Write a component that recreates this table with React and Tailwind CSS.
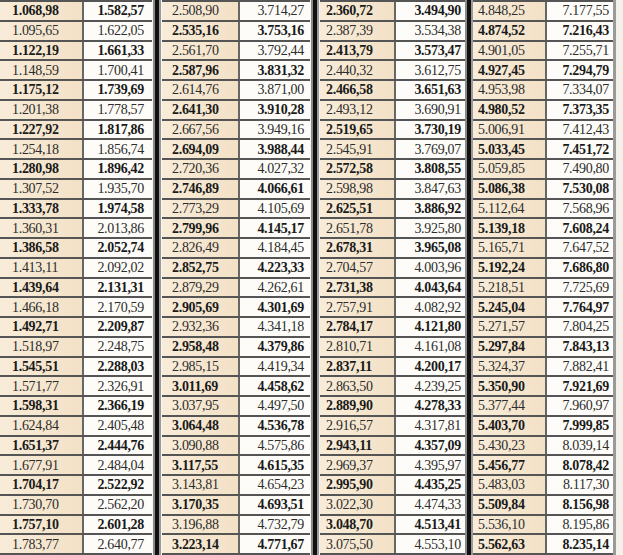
import React from 'react';

// four column pairs of the printed table, top to bottom
const groups = [
  {
    boldEven: true,
    widths: ['w-[84px]', 'w-[68px]'],
    pads: ['pl-[12px]', 'pr-[8px]'],
    a: ['1.068,98', '1.095,65', '1.122,19', '1.148,59', '1.175,12', '1.201,38', '1.227,92', '1.254,18', '1.280,98', '1.307,52', '1.333,78', '1.360,31', '1.386,58', '1.413,11', '1.439,64', '1.466,18', '1.492,71', '1.518,97', '1.545,51', '1.571,77', '1.598,31', '1.624,84', '1.651,37', '1.677,91', '1.704,17', '1.730,70', '1.757,10', '1.783,77'],
    b: ['1.582,57', '1.622,05', '1.661,33', '1.700,41', '1.739,69', '1.778,57', '1.817,86', '1.856,74', '1.896,42', '1.935,70', '1.974,58', '2.013,86', '2.052,74', '2.092,02', '2.131,31', '2.170,59', '2.209,87', '2.248,75', '2.288,03', '2.326,91', '2.366,19', '2.405,48', '2.444,76', '2.484,04', '2.522,92', '2.562,20', '2.601,28', '2.640,77'],
  },
  {
    boldEven: false,
    widths: ['w-[78px]', 'w-[70px]'],
    pads: ['pl-[10px]', 'pr-[6px]'],
    a: ['2.508,90', '2.535,16', '2.561,70', '2.587,96', '2.614,76', '2.641,30', '2.667,56', '2.694,09', '2.720,36', '2.746,89', '2.773,29', '2.799,96', '2.826,49', '2.852,75', '2.879,29', '2.905,69', '2.932,36', '2.958,48', '2.985,15', '3.011,69', '3.037,95', '3.064,48', '3.090,88', '3.117,55', '3.143,81', '3.170,35', '3.196,88', '3.223,14'],
    b: ['3.714,27', '3.753,16', '3.792,44', '3.831,32', '3.871,00', '3.910,28', '3.949,16', '3.988,44', '4.027,32', '4.066,61', '4.105,69', '4.145,17', '4.184,45', '4.223,33', '4.262,61', '4.301,69', '4.341,18', '4.379,86', '4.419,34', '4.458,62', '4.497,50', '4.536,78', '4.575,86', '4.615,35', '4.654,23', '4.693,51', '4.732,79', '4.771,67'],
  },
  {
    boldEven: true,
    widths: ['w-[76px]', 'w-[69px]'],
    pads: ['pl-[6px]', 'pr-[4px]'],
    a: ['2.360,72', '2.387,39', '2.413,79', '2.440,32', '2.466,58', '2.493,12', '2.519,65', '2.545,91', '2.572,58', '2.598,98', '2.625,51', '2.651,78', '2.678,31', '2.704,57', '2.731,38', '2.757,91', '2.784,17', '2.810,71', '2.837,11', '2.863,50', '2.889,90', '2.916,57', '2.943,11', '2.969,37', '2.995,90', '3.022,30', '3.048,70', '3.075,50'],
    b: ['3.494,90', '3.534,38', '3.573,47', '3.612,75', '3.651,63', '3.690,91', '3.730,19', '3.769,07', '3.808,55', '3.847,63', '3.886,92', '3.925,80', '3.965,08', '4.003,96', '4.043,64', '4.082,92', '4.121,80', '4.161,08', '4.200,17', '4.239,25', '4.278,33', '4.317,81', '4.357,09', '4.395,97', '4.435,25', '4.474,33', '4.513,41', '4.553,10'],
  },
  {
    boldEven: false,
    widths: ['w-[74px]', 'w-[66px]'],
    pads: ['pl-[5px]', 'pr-[4px]'],
    a: ['4.848,25', '4.874,52', '4.901,05', '4.927,45', '4.953,98', '4.980,52', '5.006,91', '5.033,45', '5.059,85', '5.086,38', '5.112,64', '5.139,18', '5.165,71', '5.192,24', '5.218,51', '5.245,04', '5.271,57', '5.297,84', '5.324,37', '5.350,90', '5.377,44', '5.403,70', '5.430,23', '5.456,77', '5.483,03', '5.509,84', '5.536,10', '5.562,63'],
    b: ['7.177,55', '7.216,43', '7.255,71', '7.294,79', '7.334,07', '7.373,35', '7.412,43', '7.451,72', '7.490,80', '7.530,08', '7.568,96', '7.608,24', '7.647,52', '7.686,80', '7.725,69', '7.764,97', '7.804,25', '7.843,13', '7.882,41', '7.921,69', '7.960,97', '7.999,85', '8.039,14', '8.078,42', '8.117,30', '8.156,98', '8.195,86', '8.235,14'],
  },
];

const Group = ({ group }) => (
  <div className="flex flex-col border-t-2 border-[#555]">
    {group.a.map((val, i) => {
      const bold = (i % 2 === 0) === group.boldEven;
      return (
        <div
          key={i}
          className={`flex h-[19.75px] border-b-2 border-[#555] text-[14px] leading-[17px] tracking-[-0.3px] ${
            bold ? 'font-bold text-[#1a1a1a]' : 'font-normal text-[#2c2c2c]'
          }`}
        >
          <div className={`${group.widths[0]} ${group.pads[0]} bg-gradient-to-r from-[#f8ecd9] to-[#f3e1c6] border-r-2 border-[#666] flex items-center`}>
            {val}
          </div>
          <div className={`${group.widths[1]} ${group.pads[1]} bg-[#fdfcf8] flex items-center justify-end`}>
            {group.b[i]}
          </div>
        </div>
      );
    })}
  </div>
);

const Divider = ({ width }) => (
  <div className={`${width} flex justify-center bg-[#faf6ee]`}>
    <div className="w-[2px] bg-[#8a8a8a]" />
    <div className="w-[4px] bg-[#111]" />
    <div className="w-[2px] bg-[#9a9a9a]" />
  </div>
);

const App = () => {
  return (
    <div
      className="w-[623px] h-[555px] overflow-hidden bg-[#f4f1ea] flex"
      style={{ fontFamily: '"Liberation Serif", "DejaVu Serif", serif' }}
    >
      <Group group={groups[0]} />
      <Divider width="w-[10px]" />
      <Group group={groups[1]} />
      <Divider width="w-[10px]" />
      <Group group={groups[2]} />
      <Divider width="w-[8px]" />
      <Group group={groups[3]} />
      <div className="w-[3px] bg-[#9a9a9a]" />
    </div>
  );
};

export default App;
